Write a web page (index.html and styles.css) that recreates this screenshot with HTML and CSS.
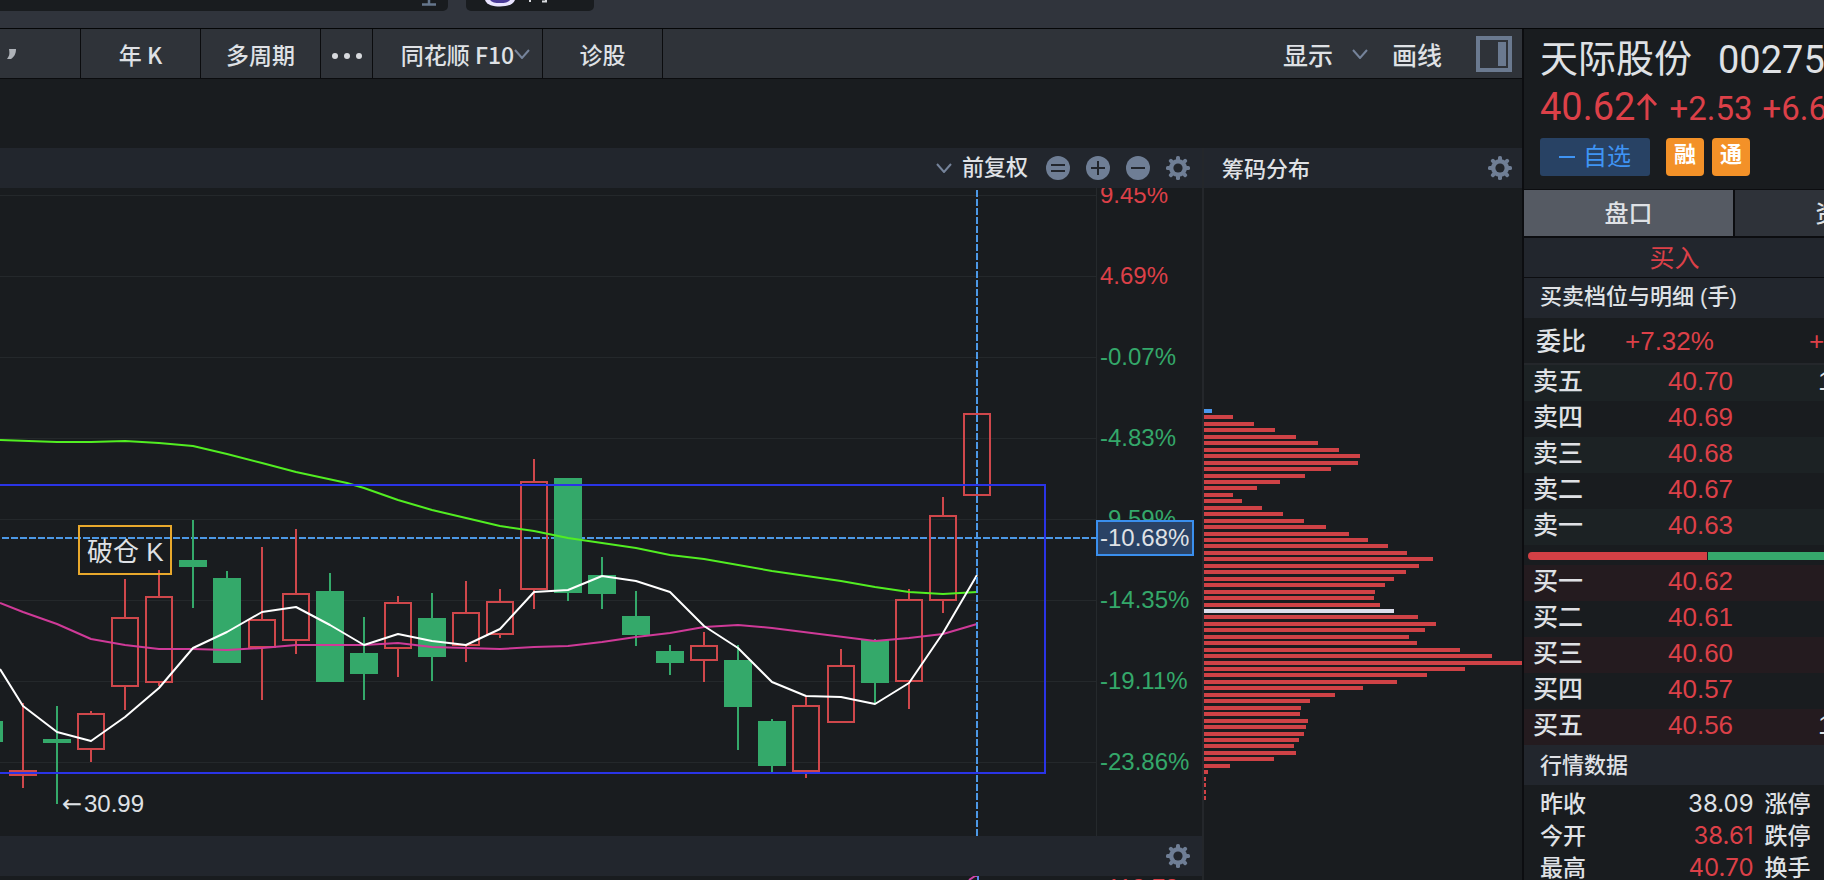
FILE: index.html
```html
<!DOCTYPE html>
<html lang="zh-CN">
<head>
<meta charset="utf-8">
<title>天际股份 年K</title>
<link rel="stylesheet" href="styles.css">
</head>
<body>
<svg class="defs" aria-hidden="true">
  <symbol id="gear" viewBox="-12 -12 24 24">
    <g fill="currentColor">
      <rect x="-2" y="-12" width="4" height="24" rx="1.6"/>
      <rect x="-2" y="-12" width="4" height="24" rx="1.6" transform="rotate(45)"/>
      <rect x="-2" y="-12" width="4" height="24" rx="1.6" transform="rotate(90)"/>
      <rect x="-2" y="-12" width="4" height="24" rx="1.6" transform="rotate(135)"/>
      <circle r="9"/>
    </g>
    <circle r="4.6" fill="#22262d"/>
  </symbol>
  <symbol id="chevron" viewBox="0 0 16 10">
    <path d="M1 1l7 8 7-8" fill="none" stroke="currentColor" stroke-width="2"/>
  </symbol>
</svg>
<div class="app">
  <header class="topbar">
    <div class="search"><svg width="16" height="6" viewBox="0 0 16 6"><path d="M8 0v4M1 4.500h14" stroke="#65768c" stroke-width="2.500" fill="none"/></svg></div>
    <button class="assistant" aria-label="问财">
      <svg width="96" height="11" viewBox="0 0 96 11">
        <path d="M0 0h30c-2 5-8 6.500-15 6.500S2 5 0 0z" fill="#e9e4ff"/>
        <path d="M5 0h20c-2 2.500-5 3-10 3S7 2.500 5 0z" fill="#4a3a98"/>
        <path d="M45 0v2M61 0v1.500h-4" stroke="#d8dade" stroke-width="2" fill="none"/>
      </svg>
    </button>
  </header>

  <main class="work">
    <nav class="toolbar">
      <button class="tool cut" aria-label="周期"><svg width="14" height="16" viewBox="0 0 14 16"><path d="M5 3h7c0 5-2 8-5 10H3c2-3 3-4 2-10z" fill="#aeb2b8"/></svg></button>
      <button class="tool year">年 K</button>
      <button class="tool year">多周期</button>
      <button class="tool more" aria-label="更多"><svg width="32" height="6" viewBox="0 0 32 6"><g fill="#d8dade"><circle cx="4" cy="3" r="3"/><circle cx="16" cy="3" r="3"/><circle cx="28" cy="3" r="3"/></g></svg></button>
      <button class="tool f10">同花顺 F10<svg class="chev"><use href="#chevron"/></svg></button>
      <button class="tool year">诊股</button>
      <div class="tools-right">
        <button class="plain">显示</button>
        <svg class="chev"><use href="#chevron"/></svg>
        <button class="plain">画线</button>
        <button class="toggle" aria-label="侧栏"><svg width="36" height="36" viewBox="0 0 36 36"><rect x="2" y="2" width="32" height="32" fill="none" stroke="#6b7a90" stroke-width="4"/><rect x="22" y="6" width="8" height="24" fill="#6b7a90"/></svg></button>
      </div>
    </nav>
    <div class="spacer"></div>
    <div class="charts">
      <section class="kline">
        <div class="bar">
          <svg class="chev"><use href="#chevron"/></svg>
          <button class="adjust">前复权</button>
          <button class="icon" aria-label="还原"><svg viewBox="0 0 24 24"><circle cx="12" cy="12" r="12" fill="#6f7e95"/><path d="M5 9h14M5 15h14" stroke="#22262d" stroke-width="2"/></svg></button>
          <button class="icon" aria-label="放大"><svg viewBox="0 0 24 24"><circle cx="12" cy="12" r="12" fill="#6f7e95"/><path d="M5 12h14M12 5v14" stroke="#22262d" stroke-width="2"/></svg></button>
          <button class="icon" aria-label="缩小"><svg viewBox="0 0 24 24"><circle cx="12" cy="12" r="12" fill="#6f7e95"/><path d="M5 12h14" stroke="#22262d" stroke-width="2"/></svg></button>
          <button class="icon" aria-label="设置"><svg><use href="#gear"/></svg></button>
        </div>
        <div class="body">
          <div class="plot">
            <svg id="plot" width="1096" height="648" viewBox="0 188 1096 648"></svg>
          </div>
          <div class="axis">
            <ol class="ticks">
              <li class="up">9.45%</li><li class="up">4.69%</li><li class="down">-0.07%</li><li class="down">-4.83%</li>
              <li class="down">-9.59%</li><li class="down">-14.35%</li><li class="down">-19.11%</li><li class="down">-23.86%</li>
            </ol>
            <div class="cursor">-10.68%</div>
          </div>
        </div>
        <div class="bar"><button class="icon" aria-label="指标设置"><svg><use href="#gear"/></svg></button></div>
        <div class="next">
          <svg class="next-line" width="20" height="4" viewBox="0 0 20 4"><path d="M2 4l6-4h3v4" stroke="#d044a8" stroke-width="2" fill="none"/><path d="M11 0v4" stroke="#5a86e8" stroke-width="2"/></svg>
          <span class="next-tick">113.73</span>
        </div>
      </section>
      <section class="chips">
        <div class="bar"><h2>筹码分布</h2><button class="icon" aria-label="筹码设置"><svg><use href="#gear"/></svg></button></div>
        <div class="chips-body"><svg id="chips" width="318" height="692" viewBox="0 188 318 692"></svg></div>
      </section>
    </div>
  </main>

  <aside class="quote">
    <div class="quote-inner">
      <div class="head">
        <div class="name"><h1>天际股份</h1><span>002759</span></div>
        <div class="price"><b>40.62<svg width="24" height="28" viewBox="0 0 24 28"><path d="M12 27V3M3 12l9-9.500 9 9.500" fill="none" stroke="currentColor" stroke-width="3"/></svg></b><span>+2.53</span><span>+6.64%</span></div>
        <div class="tags"><button class="fav"><i></i>自选</button><span class="badge">融</span><span class="badge">通</span></div>
      </div>
      <div class="tabs"><button class="on">盘口</button><button>资金</button></div>
      <div class="side"><button>买入</button></div>
      <h3 class="caption">买卖档位与明细 (手)</h3>
      <div class="ratio"><span>委比</span><span class="up">+7.32%</span><span class="up">+139</span></div>
      <table class="book sell">
        <tr><th>卖五</th><td>40.70</td><td class="vol">1</td></tr>
        <tr><th>卖四</th><td>40.69</td><td></td></tr>
        <tr><th>卖三</th><td>40.68</td><td></td></tr>
        <tr><th>卖二</th><td>40.67</td><td></td></tr>
        <tr><th>卖一</th><td>40.63</td><td></td></tr>
      </table>
      <div class="force"><i class="bid"></i><i class="ask"></i></div>
      <table class="book buy">
        <tr><th>买一</th><td>40.62</td><td></td></tr>
        <tr><th>买二</th><td>40.61</td><td></td></tr>
        <tr><th>买三</th><td>40.60</td><td></td></tr>
        <tr><th>买四</th><td>40.57</td><td></td></tr>
        <tr><th>买五</th><td>40.56</td><td class="vol">1</td></tr>
      </table>
      <h3 class="caption data">行情数据</h3>
      <table class="stats">
        <tr><th>昨收</th><td>38.09</td><th>涨停</th></tr>
        <tr><th>今开</th><td class="up">38.61</td><th>跌停</th></tr>
        <tr><th>最高</th><td class="up">40.70</td><th>换手</th></tr>
      </table>
    </div>
  </aside>
</div>
<script src="chart.js"></script>
</body>
</html>
```

FILE: styles.css
```css
* { box-sizing: border-box; }
body {
  margin: 0;
  height: 100vh;
  overflow: hidden;
  background: #191c1f;
  color: #dfe1e5;
  font-family: "Liberation Sans", "Noto Sans CJK SC", sans-serif;
  font-size: 24px;
}
button { padding: 0; border: 0; background: none; color: inherit; font: inherit; cursor: pointer; }
h1, h2, h3 { margin: 0; font-weight: 500; }
svg { display: block; flex: none; }
i { display: block; }
.defs { position: absolute; width: 0; height: 0; }
.up { color: #dc4048; }
.down { color: #34a86a; }

.app {
  display: grid;
  grid-template: 29px minmax(0, 1fr) / minmax(0, 1fr) 302px;
  height: 100%;
}
.topbar {
  grid-column: 1 / -1;
  display: flex;
  align-items: flex-start;
  gap: 18px;
  background: #30343c;
  border-bottom: 1px solid #050607;
}
.search {
  display: flex;
  justify-content: flex-end;
  width: 448px;
  height: 11px;
  padding-right: 11px;
  border-radius: 0 0 5px 0;
  background: #191c1f;
}
.assistant {
  width: 128px;
  height: 11px;
  padding-left: 19px;
  border-radius: 0 0 5px 5px;
  background: #191c1f;
}

.work { display: flex; flex-direction: column; min-width: 0; }
.toolbar {
  display: flex;
  flex: none;
  height: 50px;
  background: #2f3339;
  border-bottom: 1px solid #0b0c0e;
  font-family: "Noto Sans CJK SC", sans-serif;
  font-size: 23px;
  font-weight: 500;
}
.tool {
  display: flex;
  align-items: center;
  justify-content: center;
  height: 49px;
  border-right: 1px solid #0b0c0e;
  line-height: 48px;
  white-space: pre;
}
.cut { width: 81px; justify-content: flex-start; padding-left: 4px; }
.year { width: 120px; }
.more { width: 52px; padding-top: 4px; }
.f10 { width: 170px; padding-left: 16px; }
.chev { width: 16px; height: 10px; color: #75839a; }
.tools-right {
  display: flex;
  align-items: center;
  margin-left: auto;
  padding-right: 10px;
  font-size: 25px;
  line-height: 46px;
}
.plain { height: 49px; }
.tools-right .chev { margin: 0 24px 0 19px; }
.toggle { margin-left: 34px; }
.spacer { flex: none; height: 69px; }
.charts {
  display: grid;
  grid-template-columns: minmax(0, 1fr) 318px;
  flex: 1;
  min-height: 0;
}
.kline { display: flex; flex-direction: column; border-right: 2px solid #24272b; min-height: 0; }
.bar {
  display: flex;
  flex: none;
  align-items: center;
  justify-content: flex-end;
  gap: 16px;
  height: 40px;
  padding-right: 12px;
  background: #22262d;
  font-size: 22px;
}
.bar .chev { margin-right: -6px; }
.bar h2 { margin-right: auto; font-size: 22px; line-height: 32px; padding-top: 3px; }
.adjust { margin-right: 2px; font-weight: 500; line-height: 38px; height: 40px; }
.icon { width: 24px; height: 24px; color: #6f7e95; }
.icon svg { width: 24px; height: 24px; }
.body { display: flex; flex: 1; min-height: 0; overflow: hidden; }
.plot { display: flex; flex: 1; justify-content: flex-end; min-width: 0; overflow: hidden; }
.axis { position: relative; width: 106px; border-left: 1px solid #25292c; }
.ticks { margin: -34px 0 0; padding: 0 0 0 3px; list-style: none; line-height: 81px; }
.cursor {
  position: absolute;
  top: 332px;
  left: -1px;
  padding-left: 2px;
  width: 98px;
  height: 36px;
  border: 2px solid #3a8fee;
  background: #2a4265;
  line-height: 32px;
}
.next { display: flex; flex: none; justify-content: flex-end; height: 4px; overflow: hidden; }
.next-line { margin-right: 120px; }
.next-tick { width: 95px; color: #dc4048; line-height: 30px; margin-top: -3px; }
.chips { display: flex; flex-direction: column; min-height: 0; overflow: hidden; }
.chips .bar { padding: 0 10px 0 18px; }

.quote { border-left: 2px solid #0c0d10; overflow: hidden; }
.quote-inner { width: 420px; }
.head { height: 160px; padding: 8px 0 0 16px; }
.name { display: flex; align-items: center; gap: 26px; height: 46px; font-family: Roboto, "Noto Sans CJK SC", sans-serif; font-size: 38px; }
.name h1 { font-size: 38px; line-height: 44px; height: 46px; font-weight: 400; }
.price { display: flex; align-items: baseline; gap: 10px; height: 48px; color: #dc4048; font-family: Roboto, sans-serif; font-size: 33px; line-height: 48px; }
.price b { display: flex; align-items: center; font-size: 38px; font-weight: 400; }
.tags { display: flex; gap: 8px; padding-top: 7px; }
.fav {
  display: flex;
  align-items: center;
  justify-content: center;
  gap: 8px;
  width: 110px;
  height: 38px;
  margin-right: 8px;
  border-radius: 3px;
  background: #284264;
  color: #3f94f4;
  line-height: 36px;
}
.fav i { width: 16px; height: 2px; background: #3f94f4; }
.badge { width: 38px; height: 38px; border-radius: 4px; background: #f39128; color: #fff; font-size: 22px; font-weight: 700; line-height: 34px; text-align: center; }
.tabs { display: flex; gap: 2px; height: 49px; padding: 1px 0 2px; background: #0c0d10; }
.tabs button { width: 209px; padding-bottom: 4px; background: #2e3239; font-weight: 500; }
.tabs .on { background: #555a63; }
.side { height: 40px; padding-left: 1px; background: #22262d; border-bottom: 1px solid #0c0d10; }
.side button { width: 299px; height: 39px; color: #dc4048; font-size: 25px; line-height: 38px; }
.caption { height: 40px; padding-left: 16px; background: #22262d; font-size: 22px; line-height: 38px; }
.ratio { display: flex; height: 47px; padding-left: 12px; border-bottom: 2px solid #24272b; font-size: 25px; font-weight: 500; line-height: 46px; }
.ratio span { flex: none; width: 89px; }
.ratio .up { width: 184px; font-size: 26px; font-weight: 400; }
table { border-collapse: collapse; table-layout: fixed; width: 420px; }
th, td { padding: 0; font-weight: 400; text-align: left; }
.book th, .book td { padding-bottom: 4px; line-height: 32px; }
.book td { width: 149px; color: #dc4048; font-size: 26px; }
.book th { width: 144px; padding-left: 9px; font-size: 25px; font-weight: 500; }
.book tr { height: 36px; }
.book .vol { width: 127px; padding-left: 1px; color: #dfe1e5; }
.sell tr:nth-child(odd) { background: #1c2224; }
.buy tr:nth-child(odd) { background: #241b1f; }
.force { display: flex; gap: 1px; height: 20px; padding: 7px 0 5px 4px; }
.force .bid { width: 179px; border-radius: 4px 0 0 4px; background: #d34045; }
.force .ask { flex: 1; background: #36a86c; }
.data { line-height: 42px; }
.stats { margin-top: 3px; }
.stats th { width: 76px; padding-left: 16px; font-size: 23px; font-weight: 500; line-height: 32px; }
.stats td { width: 153px; text-align: right; font-family: Inter, sans-serif; line-height: 32px; }
.stats tr { height: 32px; }
.stats td + th { width: 190px; padding-left: 11px; }

#plot .grid { stroke: #24282b; stroke-width: 1; }
#plot text { fill: #dfe1e5; }
#plot .arrow { font-family: "DejaVu Sans", sans-serif; }
#plot .ma { fill: none; stroke-width: 2; stroke-linejoin: round; }
#plot .cross { stroke: #4c98e6; stroke-width: 2; stroke-dasharray: 7 2; }
```

FILE: chart.js
```js
const NS = 'http://www.w3.org/2000/svg';
const RED = '#cf474b', GREEN = '#34a96a';

function add(parent, tag, attrs, text) {
  const el = document.createElementNS(NS, tag);
  for (const key in attrs) el.setAttribute(key, attrs[key]);
  if (text) el.textContent = text;
  parent.appendChild(el);
}

// center x, direction, high, body top, body bottom, low
const candles = [
  [-11, 'g', 721, 721, 742, 742], [23, 'r', 703, 770, 776, 788], [57, 'g', 706, 739, 743, 804],
  [91, 'r', 711, 713, 750, 762], [125, 'r', 579, 617, 687, 710], [159, 'r', 570, 596, 683, 686],
  [193, 'g', 520, 560, 567, 608], [227, 'g', 571, 578, 663, 663], [262, 'r', 547, 619, 648, 700],
  [296, 'r', 529, 593, 641, 654], [330, 'g', 573, 591, 682, 682],
  [364, 'g', 617, 653, 674, 700], [398, 'r', 596, 602, 649, 677], [432, 'g', 593, 618, 657, 681],
  [466, 'r', 581, 612, 646, 662], [500, 'r', 589, 601, 635, 638], [534, 'r', 459, 481, 590, 609],
  [568, 'g', 478, 478, 593, 601], [602, 'g', 557, 575, 594, 609], [636, 'g', 591, 616, 635, 646],
  [670, 'g', 645, 651, 663, 675], [704, 'r', 632, 645, 661, 682], [738, 'g', 645, 660, 707, 750],
  [772, 'g', 719, 721, 766, 772], [806, 'r', 697, 705, 772, 778], [841, 'r', 649, 665, 723, 723],
  [875, 'g', 639, 640, 683, 704], [909, 'r', 589, 599, 682, 709], [943, 'r', 497, 515, 601, 613],
  [977, 'r', 411, 413, 496, 500]
];

const plot = document.getElementById('plot');
for (let y = 195; y < 836; y += 81) add(plot, 'line', { class: 'grid', x1: 0, x2: 1096, y1: y + 0.5, y2: y + 0.5 });

add(plot, 'line', { class: 'cross', x1: 2, x2: 1096, y1: 538, y2: 538 });

for (const [x, dir, high, top, bottom, low] of candles) {
  const color = dir === 'r' ? RED : GREEN;
  add(plot, 'line', { x1: x, x2: x, y1: high, y2: top, stroke: color, 'stroke-width': 2 });
  add(plot, 'line', { x1: x, x2: x, y1: bottom, y2: low, stroke: color, 'stroke-width': 2 });
  if (dir === 'r') add(plot, 'rect', { x: x - 13, y: top + 1, width: 26, height: bottom - top - 2, fill: 'none', stroke: color, 'stroke-width': 2 });
  else add(plot, 'rect', { x: x - 14, y: top, width: 28, height: bottom - top, fill: color });
}

add(plot, 'polyline', { class: 'ma', stroke: '#52ee22', points: '0,440 57,442 91,442 125,441 159,443 193,446 227,454 262,463 296,472 347,483 364,488 398,500 432,510 500,526 534,531 568,538 602,543 636,548 670,555 704,559 772,571 841,581 875,587 909,592 943,594 977,592' });
add(plot, 'polyline', { class: 'ma', stroke: '#cf3a98', points: '0,603 23,612 57,624 91,639 125,645 159,649 193,649 227,650 262,648 296,645 364,645 398,643 432,647 466,648 500,649 534,647 568,646 602,642 636,637 670,633 704,627 738,625 772,628 875,641 909,638 943,634 977,624' });
add(plot, 'polyline', { class: 'ma', stroke: '#ffffff', points: '0,669 23,706 57,732 91,741 125,717 159,688 193,648 227,632 262,612 296,607 330,625 364,645 398,634 432,641 466,645 500,629 534,592 568,590 602,576 636,581 670,592 704,626 738,648 772,682 806,696 841,697 875,704 909,683 943,633 977,575' });

add(plot, 'line', { class: 'cross', x1: 977, x2: 977, y1: 190, y2: 836 });
add(plot, 'path', { d: 'M0 485H1045V773H0', fill: 'none', stroke: '#2a34e6', 'stroke-width': 2 });
add(plot, 'rect', { x: 79, y: 526, width: 92, height: 48, fill: 'none', stroke: '#e8a82c', 'stroke-width': 2 });
add(plot, 'text', { x: 87, y: 561, 'font-size': 26 }, '破仓 K');
add(plot, 'text', { class: 'arrow', x: 62, y: 812 }, '←');
add(plot, 'text', { x: 84, y: 812 }, '30.99');

const widths = [8, 29, 50, 71, 92, 114, 135, 156, 154, 127, 101, 76, 53, 29, 38, 58, 79, 100, 122, 145,
  164, 184, 203, 229, 215, 202, 190, 181, 171, 170, 176, 190, 214, 232, 221, 205, 213, 256, 288, 318,
  261, 223, 193, 159, 131, 106, 97, 96, 104, 102, 100, 95, 90, 92, 70, 26, 4, 2, 2, 2, 2];
const AVERAGE = 31;
const chips = document.getElementById('chips');
widths.forEach((width, i) => {
  const fill = i === 0 ? '#4a97ec' : i === AVERAGE ? '#dcdcea' : '#cf4246';
  add(chips, 'rect', { x: 0, y: Math.round(409 + i * 6.45), width, height: 4, fill });
});
```
